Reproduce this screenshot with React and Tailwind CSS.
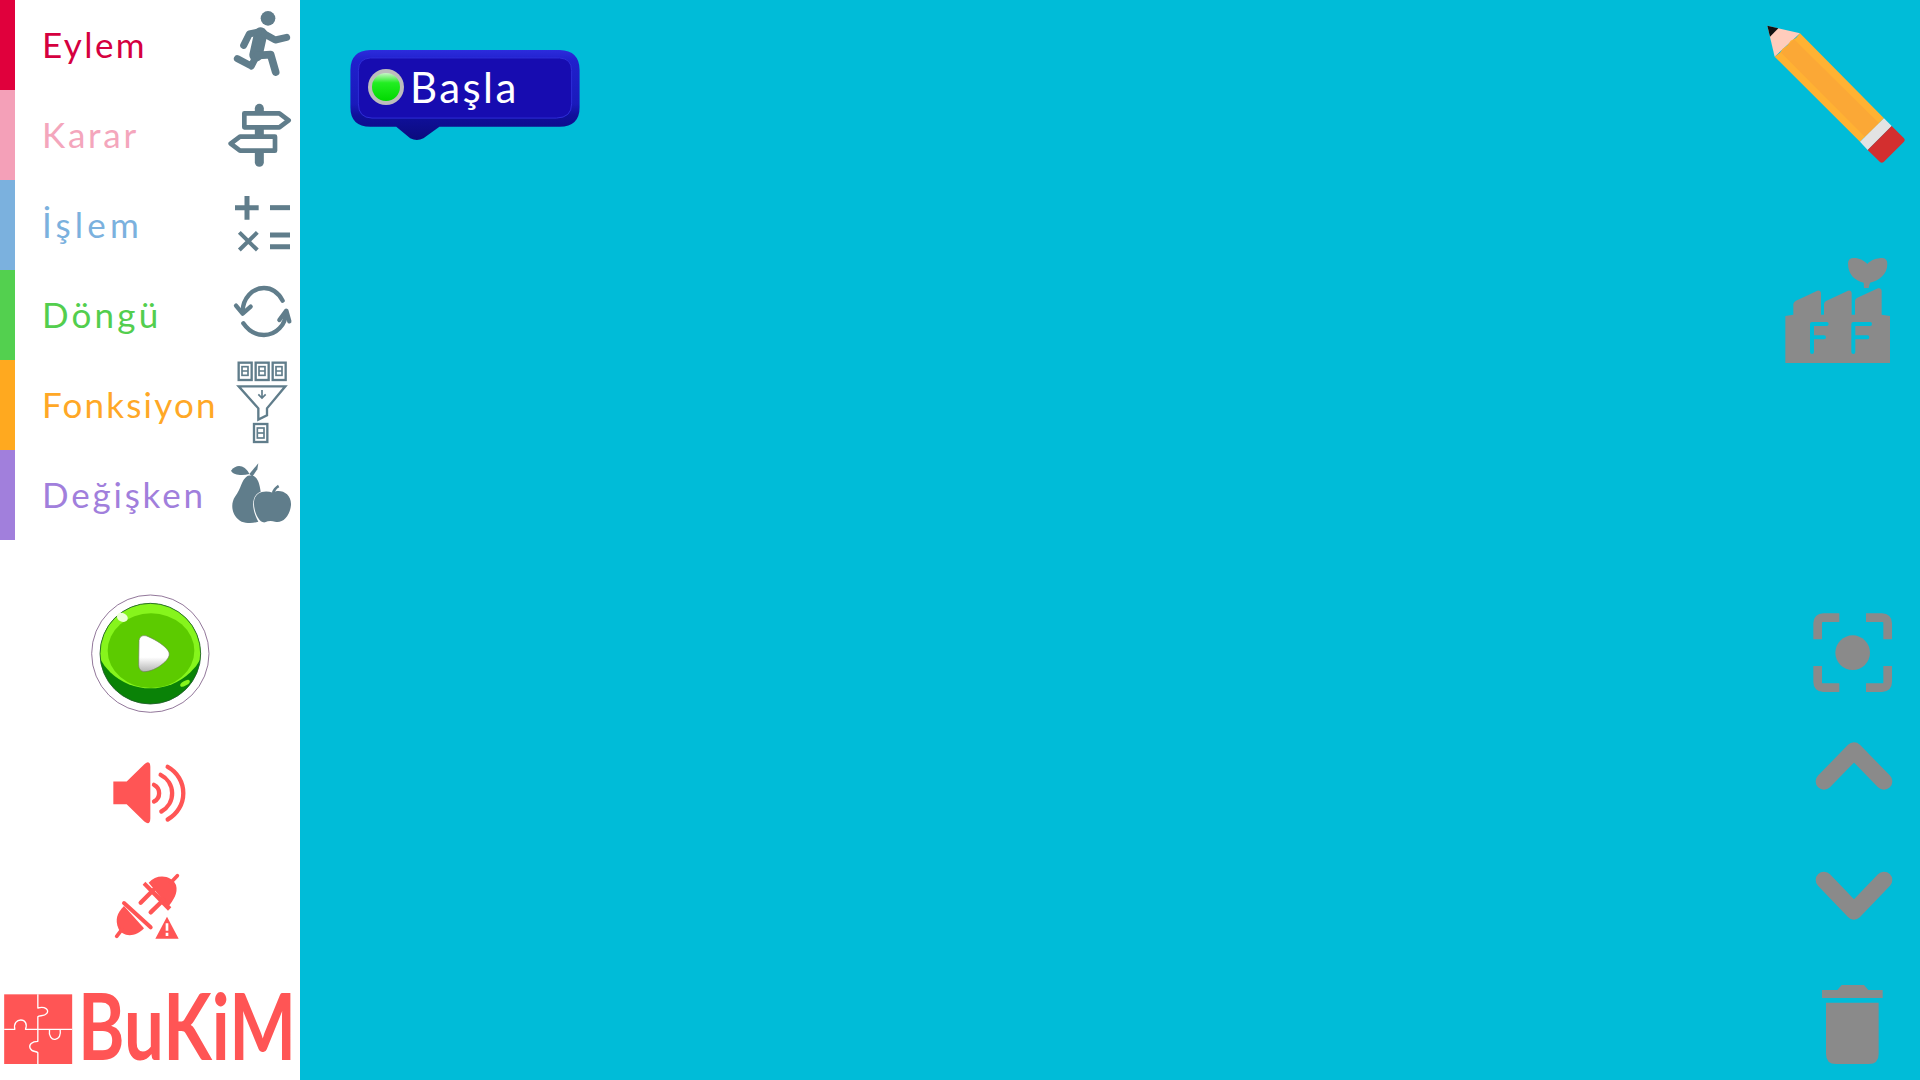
const SLATE = "#607D8B";
const RED = "#FF5555";
const GREY = "#8A8A8A";

function Runner() {
  return (
    <svg viewBox="600 0 300 270" className="w-[100px] h-[90px] shrink-0">
      <circle cx="804" cy="55" r="22" fill={SLATE} />
      <g fill="none" stroke={SLATE} strokeLinecap="round" strokeLinejoin="round">
        <path d="M782 102 L768 165" strokeWidth="40" />
        <path d="M790 100 L826 120 L860 112" strokeWidth="21" />
        <path d="M775 96 L748 102 L731 136" strokeWidth="21" />
        <path d="M768 170 L754 198 L712 176" strokeWidth="21" />
        <path d="M775 166 L812 164 L827 216" strokeWidth="23" />
      </g>
    </svg>
  );
}

function Signpost() {
  return (
    <svg viewBox="600 0 300 270" className="w-[100px] h-[90px] shrink-0">
      <path d="M778 55 L778 217" stroke={SLATE} strokeWidth="27" strokeLinecap="round" />
      <path d="M733 70 L838 70 L866 91 L838 112 L733 112 Z" fill="#fff" stroke={SLATE} strokeWidth="14" strokeLinejoin="round" />
      <path d="M825 140 L720 140 L692 161 L720 182 L825 182 Z" fill="#fff" stroke={SLATE} strokeWidth="14" strokeLinejoin="round" />
    </svg>
  );
}

function MathSigns() {
  return (
    <svg viewBox="600 540 300 270" className="w-[100px] h-[90px] shrink-0">
      <g stroke={SLATE} strokeWidth="15" fill="none">
        <path d="M705 623 H776 M741 588 V659" />
        <path d="M810 623 H870" />
        <path d="M718 697 L772 750 M772 697 L718 750" strokeWidth="12" />
        <path d="M810 705 H870 M810 740 H870" />
      </g>
    </svg>
  );
}

function Sync() {
  return (
    <svg viewBox="600 0 300 270" className="w-[100px] h-[90px] shrink-0">
      <g fill="none" stroke={SLATE} strokeWidth="13" strokeLinecap="round" strokeLinejoin="round">
        <path d="M728 125 C728 85 758 54 792 54 C815 54 835 68 848 92" />
        <path d="M708 107 L728 131 L752 110" />
        <path d="M858 125 C858 165 828 195 792 195 C768 195 745 182 730 160" />
        <path d="M838 150 L859 122 L868 154" />
      </g>
    </svg>
  );
}

function Funnel() {
  return (
    <svg viewBox="600 270 300 270" className="w-[100px] h-[90px] shrink-0">
      <g fill="none" stroke={SLATE} strokeWidth="7">
        <rect x="716" y="278" width="39" height="52" />
        <rect x="767" y="278" width="39" height="52" />
        <rect x="818" y="278" width="39" height="52" />
        <rect x="726" y="290" width="18" height="26" strokeWidth="5" />
        <rect x="777" y="290" width="18" height="26" strokeWidth="5" />
        <rect x="828" y="290" width="18" height="26" strokeWidth="5" />
        <path d="M726 303 H744 M777 303 H795 M828 303 H846" strokeWidth="5" />
        <path d="M716 349 H856 L801 415 V436 L775 449 V415 Z" strokeLinejoin="miter" />
        <path d="M786 360 V384 M775 373 L786 384 L797 373" strokeWidth="5" />
        <rect x="762" y="462" width="40" height="54" />
        <rect x="772" y="474" width="20" height="30" strokeWidth="5" />
        <path d="M772 489 H792" strokeWidth="5" />
      </g>
    </svg>
  );
}

function Fruit() {
  return (
    <svg viewBox="600 540 300 270" className="w-[100px] h-[90px] shrink-0">
      <g fill={SLATE}>
        <path d="M693 602 C710 580 735 585 748 612 C725 618 700 615 693 602 Z" />
        <path d="M748 612 L775 580 L772 598 L757 620 Z" />
        <path d="M742 618 C770 610 778 635 782 665 C760 672 748 705 775 755 C760 760 740 760 725 755 C695 740 690 702 705 680 C725 655 722 632 742 618 Z" />
        <path d="M818 668 C840 655 875 670 873 705 C870 740 845 762 825 755 C815 752 805 752 795 757 C775 760 760 720 762 695 C765 665 795 660 818 668 Z" />
        <path d="M815 668 C818 658 825 650 834 644 L838 652 C830 656 826 662 824 670 Z" />
      </g>
    </svg>
  );
}

function PlayButton() {
  return (
    <svg viewBox="270 70 360 360" className="w-[120px] h-[120px] shrink-0">
      <defs>
        <clipPath id="ball"><circle cx="451" cy="252" r="151" /></clipPath>
        <linearGradient id="playFill" x1="0" y1="0" x2="0" y2="1">
          <stop offset="0.6" stopColor="#ffffff" />
          <stop offset="1" stopColor="#b5b5b5" />
        </linearGradient>
      </defs>
      <circle cx="451" cy="252" r="176" fill="#fff" stroke="#7C5C86" strokeWidth="2.5" />
      <g clipPath="url(#ball)">
        <rect x="290" y="90" width="320" height="320" fill="#0A8207" />
        <ellipse cx="451" cy="192" rx="170" ry="164" fill="#86F51C" />
        <ellipse cx="453" cy="243" rx="130" ry="112" fill="#5CCB00" />
      </g>
      <circle cx="451" cy="252" r="151" fill="none" stroke="#1F5B2A" strokeWidth="2.5" />
      <ellipse cx="367" cy="143" rx="17" ry="13" fill="#ECFFD8" transform="rotate(25 367 143)" />
      <ellipse cx="555" cy="341" rx="16" ry="7" fill="#86F51C" transform="rotate(-30 555 341)" />
      <path d="M417 212 C420 197 432 195 445 201 C470 212 495 228 505 244 C512 256 505 268 490 281 C470 298 450 305 435 306 C422 306 416 298 416 285 Z" fill="url(#playFill)" stroke="#6F7F5A" strokeWidth="2" />
    </svg>
  );
}

function Speaker() {
  return (
    <svg viewBox="300 570 300 200" className="w-[100px] h-[67px] shrink-0">
      <path d="M340 634 L380 634 L433 582 Q450 568 451 590 L451 745 Q450 768 433 754 L380 702 L340 702 Z" fill={RED} />
      <g fill="none" stroke={RED} strokeWidth="13" strokeLinecap="round">
        <path d="M462 644 A28 28 0 0 1 462 694" />
        <path d="M482 614 A62 62 0 0 1 484 724" />
        <path d="M503 590 A90 90 0 0 1 503 748" />
      </g>
    </svg>
  );
}

function Plug() {
  return (
    <svg viewBox="300 900 300 210" className="w-[100px] h-[70px] shrink-0">
      <g fill={RED}>
        <path d="M446 938 C470 910 515 915 528 945 C535 970 520 990 505 1010 Z" />
        <path d="M428 944 L436 935 L514 1012 L504 1022 Z" />
        <path d="M422 998 L460 960 M452 1027 L490 990" stroke={RED} strokeWidth="13" strokeLinecap="round" />
        <path d="M512 938 L532 917" stroke={RED} strokeWidth="11" strokeLinecap="round" />
        <path d="M372 1008 L432 1075 C405 1105 365 1100 355 1075 C345 1050 350 1030 372 1008 Z" />
        <path d="M372 999 L452 1072" stroke={RED} strokeWidth="12" strokeLinecap="round" />
        <path d="M366 1078 L350 1099" stroke={RED} strokeWidth="11" strokeLinecap="round" />
        <path d="M501 1040 L536 1106 L466 1106 Z" />
      </g>
      <path d="M501 1060 V1082 M501 1088 V1098" stroke="#fff" strokeWidth="8" />
    </svg>
  );
}

function PuzzleLogo() {
  return (
    <svg viewBox="0 90 230 240" className="w-[77px] h-[80px] shrink-0 mb-[10px]">
      <rect x="12" y="103" width="204" height="209" fill={RED} />
      <g fill="none" stroke="#fff" strokeWidth="4" strokeLinejoin="round">
        <path d="M113 103 V144 C135 138 148 150 140 160 C132 170 118 165 113 170 V208" />
        <path d="M12 208 H44 C40 190 50 180 62 180 C75 180 82 192 76 208 H216" />
        <path d="M113 208 V244 C95 244 85 255 90 265 C95 278 108 272 113 278 V312" />
        <path d="M148 208 C145 228 155 240 165 238 C178 235 182 222 180 208" />
      </g>
    </svg>
  );
}

function Wordmark() {
  return (
    <svg viewBox="0 0 270 112" className="w-[270px] h-[112px] shrink-0">
      <text x="1" y="92" fontFamily="Lato, sans-serif" fontWeight="700" fontSize="92" fill={RED} textLength="218" lengthAdjust="spacingAndGlyphs">BuKiM</text>
    </svg>
  );
}

function Pencil() {
  return (
    <svg viewBox="0 0 540 540" className="w-[180px] h-[180px] shrink-0">
      <path d="M82 77 L180 100 L104 170 Z" fill="#FFCCBC" />
      <path d="M82 77 L115 85 L90 110 Z" fill="#111" />
      <path d="M180 100 L432 355 L360 425 L104 170 L120 158 L128 146 L143 136 L152 122 L168 114 Z" fill="#FFB233" />
      <path d="M162 118 L417 370 L375 411 L122 157 Z" fill="#FBA836" />
      <path d="M432 355 L455 378 L383 450 L360 425 Z" fill="#E3E3E3" />
      <path d="M455 378 L492 415 Q497 420 492 425 L431 486 Q425 491 420 486 L383 450 Z" fill="#D32F2F" />
    </svg>
  );
}

function Factory() {
  return (
    <svg viewBox="0 0 480 420" className="w-[160px] h-[140px] shrink-0">
      <path fill={GREY} d="M76 228 L100 224 L100 192 Q101 186 108 182 L172 152 Q182 150 183 160 L183 224 L192 224 L192 192 Q193 186 198 183 L264 152 Q274 150 275 160 L275 224 L285 224 L285 182 Q286 176 292 173 L354 145 Q364 143 365 153 L365 224 L390 228 L390 369 L76 369 Z" />
      <path fill={GREY} d="M264 70 Q264 54 282 54 C298 54 314 62 322 72 C332 60 350 54 368 54 Q382 56 382 72 C382 104 356 122 330 128 L326 144 L312 144 L311 128 C284 122 264 104 264 70 Z" />
      <path d="M200 252 H156 V336 M156 292 H192 M330 252 H280 V336 M280 292 H322" fill="none" stroke="#00BCD8" strokeWidth="12" strokeLinecap="round" strokeLinejoin="round" />
    </svg>
  );
}

function Focus() {
  return (
    <svg viewBox="0 0 390 360" className="w-[130px] h-[120px] shrink-0">
      <g fill="none" stroke={GREY} strokeWidth="26">
        <path d="M148 83 H100 Q83 83 83 100 V148" />
        <path d="M228 83 H276 Q293 83 293 100 V148" />
        <path d="M83 228 V276 Q83 293 100 293 H148" />
        <path d="M293 228 V276 Q293 293 276 293 H228" />
      </g>
      <circle cx="188" cy="188" r="52" fill={GREY} />
    </svg>
  );
}

function ChevronUp() {
  return (
    <svg viewBox="0 360 390 360" className="w-[130px] h-[120px] shrink-0">
      <path d="M102 574 L192 482 L282 574" fill="none" stroke={GREY} strokeWidth="50" strokeLinecap="round" strokeLinejoin="round" />
    </svg>
  );
}

function ChevronDown() {
  return (
    <svg viewBox="0 0 390 330" className="w-[130px] h-[110px] shrink-0">
      <path d="M102 90 L192 184 L282 90" fill="none" stroke={GREY} strokeWidth="50" strokeLinecap="round" strokeLinejoin="round" />
    </svg>
  );
}

function Trash() {
  return (
    <svg viewBox="0 330 390 360" className="w-[130px] h-[120px] shrink-0">
      <path fill={GREY} d="M96 420 H142 L155 405 H222 L235 420 H278 V444 H96 Z" />
      <path fill={GREY} d="M108 458 H266 V612 Q266 642 236 642 H138 Q108 642 108 612 Z" />
    </svg>
  );
}

function BlockShape() {
  return (
    <svg viewBox="60 60 690 280" className="absolute inset-0 w-full h-full">
      <defs>
        <linearGradient id="bevelV" x1="0" y1="0" x2="0" y2="1">
          <stop offset="0" stopColor="#2C2CDC" />
          <stop offset="0.12" stopColor="#2020CC" />
          <stop offset="0.6" stopColor="#1A1ABC" />
          <stop offset="0.72" stopColor="#10109C" />
          <stop offset="1" stopColor="#0B0B7E" />
        </linearGradient>
      </defs>
      <path fill="url(#bevelV)" d="M120 60 H690 Q750 62 750 120 V232 Q750 290 690 291 H328 L280 326 Q260 336 240 326 L198 291 H120 Q60 290 60 232 V120 Q60 62 120 60 Z" />
      <path fill="#170CB0" stroke="#2E2ED8" strokeWidth="3" d="M120 84 H690 Q726 86 726 122 V222 Q726 264 680 265 H125 Q84 264 84 222 V122 Q84 86 120 84 Z" />
    </svg>
  );
}

function BlockLight() {
  return (
    <svg viewBox="0 0 36 36" className="w-[36px] h-[36px] shrink-0">
      <defs>
        <linearGradient id="lamp" x1="0" y1="0" x2="0" y2="1">
          <stop offset="0" stopColor="#C8F5C8" />
          <stop offset="0.35" stopColor="#22EE22" />
          <stop offset="1" stopColor="#00D800" />
        </linearGradient>
      </defs>
      <circle cx="18" cy="18" r="18" fill="#BDBDBD" />
      <circle cx="18" cy="18" r="14" fill="url(#lamp)" />
    </svg>
  );
}

const CATEGORIES = [
  { name: "Eylem", bar: "bg-[#E0003C]", text: "text-[#D5003F]", tracking: "tracking-[2.4px]", Icon: Runner },
  { name: "Karar", bar: "bg-[#F4A0B8]", text: "text-[#F4A6BC]", tracking: "tracking-[2.8px]", Icon: Signpost },
  { name: "İşlem", bar: "bg-[#7BB1DE]", text: "text-[#7BB1DE]", tracking: "tracking-[4.2px]", Icon: MathSigns },
  { name: "Döngü", bar: "bg-[#53D04F]", text: "text-[#53CE4E]", tracking: "tracking-[3.2px]", Icon: Sync },
  { name: "Fonksiyon", bar: "bg-[#FFA91F]", text: "text-[#FFA826]", tracking: "tracking-[2.2px]", Icon: Funnel },
  { name: "Değişken", bar: "bg-[#A17FDC]", text: "text-[#A17FDC]", tracking: "tracking-[2.8px]", Icon: Fruit },
];

export default function App() {
  return (
    <div className="flex w-[1920px] h-[1080px] overflow-hidden bg-[#00BCD8] font-['Lato',sans-serif]">
      <aside className="flex flex-col w-[300px] h-full shrink-0 bg-white">
        {CATEGORIES.map(({ name, bar, text, tracking, Icon }) => (
          <div key={name} className="flex items-stretch h-[90px]">
            <div className={`w-[15px] shrink-0 ${bar}`} />
            <div className={`flex-1 min-w-0 flex items-center pl-[27px] pb-[2px] whitespace-nowrap text-[35px] leading-none ${text} ${tracking}`}>{name}</div>
            <Icon />
          </div>
        ))}
        <div className="flex flex-col items-center mt-[53px]">
          <PlayButton />
          <div className="mt-[47px]"><Speaker /></div>
          <div className="mt-[43px]"><Plug /></div>
        </div>
        <div className="flex items-end mt-auto">
          <PuzzleLogo />
          <Wordmark />
        </div>
      </aside>
      <main className="relative flex-1 flex justify-end h-full">
        <div className="absolute left-[50px] top-[50px] w-[230px] h-[93px]">
          <BlockShape />
          <div className="relative flex items-center gap-[6px] pl-[18px] pt-[16px]">
            <BlockLight />
            <span className="text-white text-[42px] leading-none tracking-[2.4px]">Başla</span>
          </div>
        </div>
        <div className="flex flex-col items-end w-[180px]">
          <Pencil />
          <div className="mt-[60px]"><Factory /></div>
          <div className="mt-[210px]"><Focus /></div>
          <ChevronUp />
          <div className="mt-[20px]"><ChevronDown /></div>
          <Trash />
        </div>
      </main>
    </div>
  );
}
